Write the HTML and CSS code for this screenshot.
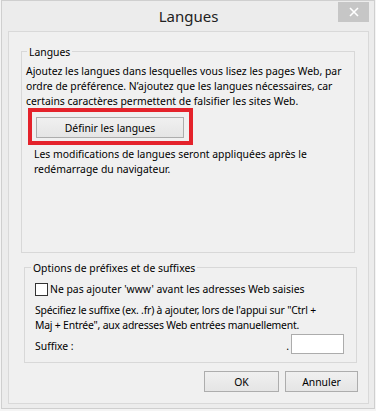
FILE: index.html
```html
<!DOCTYPE html>
<html lang="fr">
<head>
<meta charset="utf-8">
<title>Langues</title>
<link rel="stylesheet" href="styles.css">
</head>
<body>
<div class="window">
  <div class="titlebar">
    <span class="spacer"></span>
    <span class="title">Langues</span>
    <span class="close-wrap"><span class="close"><svg width="10" height="10" viewBox="0 0 10 10"><path d="M1 1L9 9M9 1L1 9" stroke="#fff" stroke-width="1.6"/></svg></span></span>
  </div>
  <div class="panel">
    <section class="group g1">
      <div class="legend">Langues</div>
      <p class="text intro">Ajoutez les langues dans lesquelles vous lisez les pages Web, par<br>ordre de préférence. N’ajoutez que les langues nécessaires, car<br>certains caractères permettent de falsifier les sites Web.</p>
      <div class="highlight"><button class="btn btn-def">Définir les langues</button></div>
      <p class="text note">Les modifications de langues seront appliquées après le<br>redémarrage du navigateur.</p>
    </section>
    <section class="group g2">
      <div class="legend">Options de préfixes et de suffixes</div>
      <label class="check-row"><span class="checkbox"></span><span>Ne pas ajouter 'www' avant les adresses Web saisies</span></label>
      <p class="text spec">Spécifiez le suffixe (ex. .fr) à ajouter, lors de l'appui sur "Ctrl +<br>Maj + Entrée", aux adresses Web entrées manuellement.</p>
      <div class="suffix-row">
        <span class="suffix-label">Suffixe :</span>
        <span class="dot">.</span>
        <span class="input"></span>
      </div>
    </section>
    <div class="actions">
      <button class="btn btn-ok">OK</button>
      <button class="btn btn-cancel">Annuler</button>
    </div>
  </div>
</div>
</body>
</html>
```
FILE: styles.css
```css
* { box-sizing: border-box; }
html, body { margin: 0; padding: 0; }
body {
  background: #f4f4f4;
  font-family: "Noto Sans", "Open Sans", sans-serif;
  font-size: 10.4px;
  color: #000;
  width: 376px;
  height: 411px;
  overflow: hidden;
}
.window {
  margin-left: 1px;
  width: 374px;
  height: 409px;
  border: 1px solid #cfcfcf;
  background: #ececec;
}
.titlebar {
  height: 30px;
  display: grid;
  grid-template-columns: 1fr auto 1fr;
}
.title {
  font-size: 15px;
  line-height: 30px;
  color: #222;
  padding-left: 1px;
}
.close-wrap {
  display: flex;
  justify-content: flex-end;
  padding-right: 5px;
  padding-top: 1px;
}
.close {
  width: 31px;
  height: 20px;
  background: #c6c6c6;
  display: flex;
  align-items: center;
  justify-content: center;
}
.panel {
  margin-left: 6px;
  width: 361px;
  height: 373px;
  border: 1px solid #d9d9d9;
  background: #f0f0f0;
  padding-top: 19px;
}
.group {
  border: 1px solid #d8d8d8;
}
.legend {
  width: fit-content;
  margin: -7px 0 0 5px;
  padding: 0 2px;
  background: #f0f0f0;
  line-height: 15px;
}
.g1 {
  margin-left: 12px;
  width: 334px;
  height: 202px;
  padding-left: 4px;
}
.g1 .legend { margin-left: 1px; }
.text {
  margin: 0;
  line-height: 15px;
  white-space: nowrap;
}
.intro { margin-top: 4px; }
.highlight {
  margin: -1px 0 0 2px;
  width: 165px;
  height: 37px;
  border: 4px solid #e4222b;
  padding: 5px 0 0 4px;
}
.btn {
  font-family: inherit;
  font-size: 10.4px;
  color: #000;
  border: 1px solid #adadad;
  background: linear-gradient(#f0f0f0, #e5e5e5);
  padding: 0;
  margin: 0;
}
.btn-def {
  width: 148px;
  height: 21px;
}
.note {
  margin: 2px 0 0 8px;
}
.g2 {
  margin: 14px 0 0 15px;
  width: 333px;
  height: 96px;
  padding-left: 10px;
}
.g2 .legend { margin-left: -4px; }
.check-row {
  display: flex;
  align-items: center;
  gap: 2px;
  line-height: 15px;
  height: 15px;
  margin-top: 6px;
}
.checkbox {
  width: 13px;
  height: 13px;
  border: 1px solid #333;
  background: #fff;
  flex: none;
}
.spec {
  margin-top: 6px;
  letter-spacing: -0.2px;
}
.suffix-row {
  display: flex;
  align-items: flex-end;
  margin-top: 1px;
  height: 20px;
}
.suffix-label {
  line-height: 15px;
}
.dot {
  margin-left: auto;
  line-height: 15px;
  margin-right: 2px;
}
.input {
  width: 53px;
  height: 20px;
  border: 1px solid #acacac;
  background: #fff;
  margin-right: 12px;
}
.actions {
  display: flex;
  justify-content: flex-end;
  gap: 6px;
  margin-top: 8px;
  padding-right: 10px;
}
.btn-ok, .btn-cancel {
  width: 75px;
  height: 21px;
}
.btn-cancel { width: 73px; }
```
